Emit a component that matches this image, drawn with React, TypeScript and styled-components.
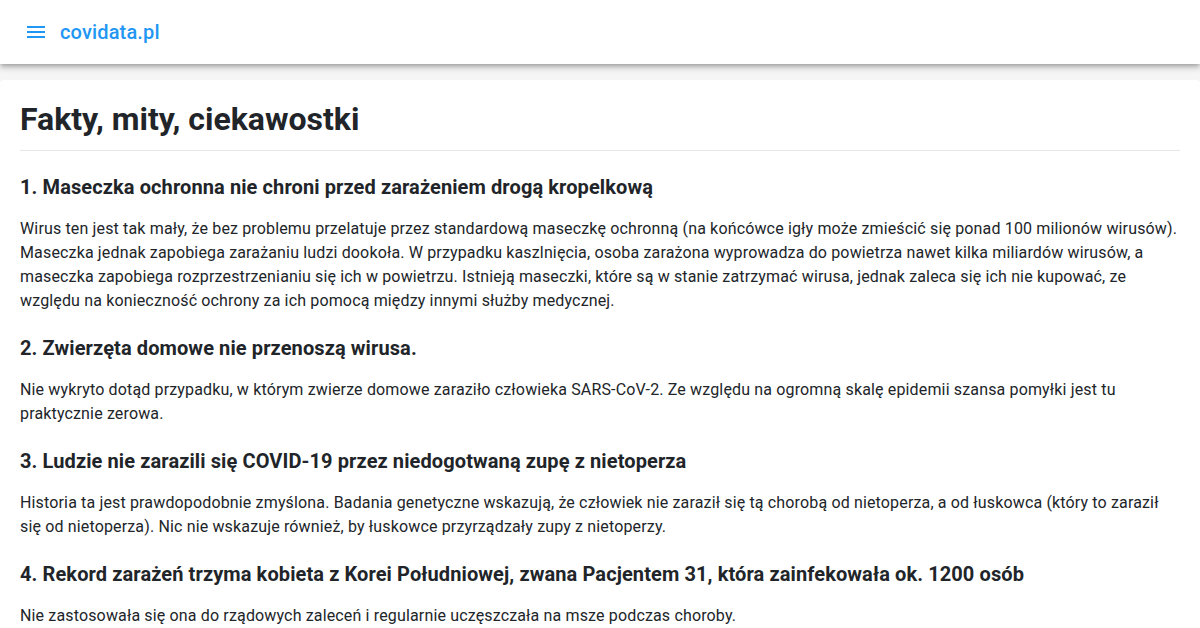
import React from "react";
import styled, { createGlobalStyle } from "styled-components";

const Global = createGlobalStyle`
  html, body { margin: 0; padding: 0; background: #f5f5f5; }
  body { font-family: Roboto, "Noto Sans", sans-serif; color: #212529; }
  * { box-sizing: border-box; }
`;

const AppBar = styled.header`
  height: 64px;
  background: #ffffff;
  display: flex;
  align-items: center;
  padding: 0 24px;
  gap: 12px;
  box-shadow: 0 2px 4px -1px rgba(0,0,0,0.2), 0 4px 5px 0 rgba(0,0,0,0.14), 0 1px 10px 0 rgba(0,0,0,0.12);
  position: relative;
  z-index: 2;
`;

const MenuButton = styled.button`
  width: 24px;
  height: 24px;
  padding: 0;
  border: none;
  background: none;
  display: flex;
  color: #2196f3;
`;

const Brand = styled.div`
  font-size: 20px;
  font-weight: 500;
  color: #2196f3;
  letter-spacing: 0.15px;
`;

const Main = styled.main`
  padding-top: 16px;
`;

const Card = styled.article`
  background: #ffffff;
  border-radius: 4px;
  padding: 20px 20px 20px;
`;

const Title = styled.h1`
  font-size: 32px;
  font-weight: 700;
  line-height: 1.2;
  margin: 0 0 12px;
`;

const Rule = styled.hr`
  border: none;
  border-top: 1px solid #e6e6ea;
  margin: 0 0 24px;
`;

const Heading = styled.h4`
  font-size: 20px;
  font-weight: 700;
  line-height: 24px;
  letter-spacing: 0.1px;
  margin: 0 0 18px;
`;

const Paragraph = styled.p`
  font-size: 16px;
  line-height: 24px;
  letter-spacing: 0.15px;
  margin: 0 0 23px;
`;

const items = [
  {
    h: "1. Maseczka ochronna nie chroni przed zarażeniem drogą kropelkową",
    p: "Wirus ten jest tak mały, że bez problemu przelatuje przez standardową maseczkę ochronną (na końcówce igły może zmieścić się ponad 100 milionów wirusów). Maseczka jednak zapobiega zarażaniu ludzi dookoła. W przypadku kaszlnięcia, osoba zarażona wyprowadza do powietrza nawet kilka miliardów wirusów, a maseczka zapobiega rozprzestrzenianiu się ich w powietrzu. Istnieją maseczki, które są w stanie zatrzymać wirusa, jednak zaleca się ich nie kupować, ze względu na konieczność ochrony za ich pomocą między innymi służby medycznej.",
  },
  {
    h: "2. Zwierzęta domowe nie przenoszą wirusa.",
    p: "Nie wykryto dotąd przypadku, w którym zwierze domowe zaraziło człowieka SARS-CoV-2. Ze względu na ogromną skalę epidemii szansa pomyłki jest tu praktycznie zerowa.",
  },
  {
    h: "3. Ludzie nie zarazili się COVID-19 przez niedogotwaną zupę z nietoperza",
    p: "Historia ta jest prawdopodobnie zmyślona. Badania genetyczne wskazują, że człowiek nie zaraził się tą chorobą od nietoperza, a od łuskowca (który to zaraził się od nietoperza). Nic nie wskazuje również, by łuskowce przyrządzały zupy z nietoperzy.",
  },
  {
    h: "4. Rekord zarażeń trzyma kobieta z Korei Południowej, zwana Pacjentem 31, która zainfekowała ok. 1200 osób",
    p: "Nie zastosowała się ona do rządowych zaleceń i regularnie uczęszczała na msze podczas choroby.",
  },
];

export default function App() {
  return (
    <>
      <Global />
      <AppBar>
        <MenuButton aria-label="menu">
          <svg width="24" height="24" viewBox="0 0 24 24" fill="currentColor">
            <path d="M3 18h18v-2H3v2zm0-5h18v-2H3v2zm0-7v2h18V6H3z" />
          </svg>
        </MenuButton>
        <Brand>covidata.pl</Brand>
      </AppBar>
      <Main>
        <Card>
          <Title>Fakty, mity, ciekawostki</Title>
          <Rule />
          {items.map((it) => (
            <React.Fragment key={it.h}>
              <Heading>{it.h}</Heading>
              <Paragraph>{it.p}</Paragraph>
            </React.Fragment>
          ))}
        </Card>
      </Main>
    </>
  );
}
